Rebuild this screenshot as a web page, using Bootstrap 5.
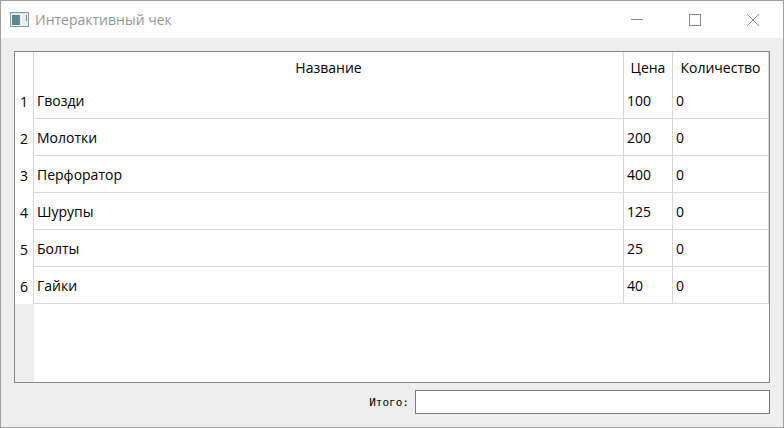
<!DOCTYPE html>
<html lang="ru">
<head>
<meta charset="utf-8">
<meta name="viewport" content="width=device-width, initial-scale=1">
<title>Интерактивный чек</title>
<link href="https://cdn.jsdelivr.net/npm/bootstrap@5.3.0/dist/css/bootstrap.min.css" rel="stylesheet">
<style>
body { font-family: "Open Sans", "Noto Sans", sans-serif; font-size: 14px; line-height: 20px; color: #000; }
.app-window { background: #eee; border: 1px solid #9f9f9f; }
.title-bar { background: #fff; height: 37px; padding-left: 9px; padding-right: 1px; color: #989898; }
.title-bar h1 { font-size: 14px; line-height: 20px; margin-left: 6px; }
.caption-btn { width: 58px; height: 36px; color: #8c8c8c; }
.sheet { border: 1px solid #828790; }
.goods { table-layout: fixed; width: 100%; border-collapse: separate; border-spacing: 0; }
.goods th, .goods td { height: 37px; padding: 2px 3px 0; font-weight: 400; border-right: 1px solid #d8d8d8; }
.goods thead th, .goods thead td { height: 30px; padding: 2px 0 0; text-align: center; }
.goods tbody td { border-bottom: 1px solid #d8d8d8; }
.goods tbody th { padding: 2px 0 0; text-align: center; }
.col-num, .gutter { width: 19px; }
.col-price { width: 49px; }
.col-qty { width: 96px; }
.gutter { background: #eee; }
.total-label { font: 11px/16px "DejaVu Sans Mono", monospace; padding-top: 2px; }
.total-field { width: 355px; height: 24px; border: 1px solid #7a7a7a; background: #fff; }
.client { padding: 13px; }
.total-row { padding-top: 7px; gap: 6px; }
</style>
</head>
<body>
<main class="app-window d-flex flex-column vh-100">
  <header class="title-bar d-flex align-items-center flex-shrink-0">
    <svg width="19" height="15" viewBox="0 0 19 15" aria-hidden="true">
      <rect x=".5" y=".5" width="18" height="14" fill="#eef1f3" stroke="#8d989e"/>
      <rect x="2" y="3" width="8" height="10" fill="#5d8795"/>
      <path d="M11.500 2v11" stroke="#fff"/>
      <rect x="12" y="3" width="4" height="10" fill="#e9ecee"/>
      <path d="M16.500 3v6" stroke="#6f8e9b"/>
      <path d="M1 1.500h17" stroke="#dce3e7"/>
    </svg>
    <h1 class="mb-0 flex-grow-1 fw-normal">Интерактивный чек</h1>
    <button type="button" class="caption-btn btn p-0 border-0 rounded-0 d-flex align-items-center justify-content-center" aria-label="Свернуть">
      <svg width="12" height="12" viewBox="0 0 12 12" fill="none" stroke="currentColor"><path d="M0 5.500h12"/></svg>
    </button>
    <button type="button" class="caption-btn btn p-0 border-0 rounded-0 d-flex align-items-center justify-content-center" aria-label="Развернуть">
      <svg width="12" height="12" viewBox="0 0 12 12" fill="none" stroke="currentColor"><rect x=".5" y=".5" width="11" height="11"/></svg>
    </button>
    <button type="button" class="caption-btn btn p-0 border-0 rounded-0 d-flex align-items-center justify-content-center" aria-label="Закрыть">
      <svg width="12" height="12" viewBox="0 0 12 12" fill="none" stroke="currentColor"><path d="M0 0l12 12M12 0L0 12"/></svg>
    </button>
  </header>
  <div class="client d-flex flex-column flex-grow-1">
    <section class="sheet bg-white d-flex flex-column flex-grow-1">
      <table class="goods">
        <colgroup><col class="col-num"><col><col class="col-price"><col class="col-qty"></colgroup>
        <thead>
          <tr><td></td><th scope="col">Название</th><th scope="col">Цена</th><th scope="col">Количество</th></tr>
        </thead>
        <tbody>
          <tr><th scope="row">1</th><td>Гвозди</td><td>100</td><td>0</td></tr>
          <tr><th scope="row">2</th><td>Молотки</td><td>200</td><td>0</td></tr>
          <tr><th scope="row">3</th><td>Перфоратор</td><td>400</td><td>0</td></tr>
          <tr><th scope="row">4</th><td>Шурупы</td><td>125</td><td>0</td></tr>
          <tr><th scope="row">5</th><td>Болты</td><td>25</td><td>0</td></tr>
          <tr><th scope="row">6</th><td>Гайки</td><td>40</td><td>0</td></tr>
        </tbody>
      </table>
      <div class="gutter flex-grow-1"></div>
    </section>
    <div class="total-row d-flex align-items-center justify-content-end">
      <label for="total" class="total-label">Итого:</label>
      <input id="total" type="text" class="total-field px-1 py-0" readonly>
    </div>
  </div>
</main>
<script src="https://cdn.jsdelivr.net/npm/bootstrap@5.3.0/dist/js/bootstrap.bundle.min.js"></script>
</body>
</html>
